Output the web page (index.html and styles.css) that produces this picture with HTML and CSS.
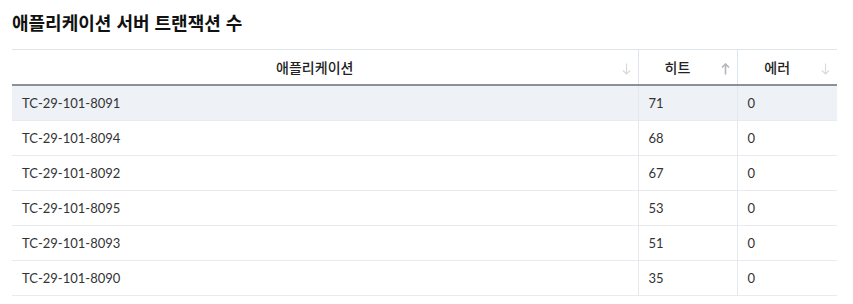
FILE: index.html
```html
<!DOCTYPE html>
<html lang="ko">
<head>
<meta charset="utf-8">
<link rel="stylesheet" href="styles.css">
</head>
<body>
<div class="panel">
  <h2 class="title">애플리케이션 서버 트랜잭션 수</h2>
  <table class="grid">
    <colgroup>
      <col class="c-app"><col class="c-hit"><col class="c-err">
    </colgroup>
    <thead>
      <tr>
        <th>애플리케이션<svg class="arrow" viewBox="0 0 9 12" width="9" height="12"><path d="M4.5 0.5V11M1 7.5l3.5 3.5 3.5-3.5"/></svg></th>
        <th>히트<svg class="arrow active" viewBox="0 0 9 12" width="9" height="12"><path d="M4.5 11.5V1M1 4.5l3.5-3.5 3.5 3.5"/></svg></th>
        <th>에러<svg class="arrow" viewBox="0 0 9 12" width="9" height="12"><path d="M4.5 0.5V11M1 7.5l3.5 3.5 3.5-3.5"/></svg></th>
      </tr>
    </thead>
    <tbody>
      <tr class="hl"><td>TC-29-101-8091</td><td>71</td><td>0</td></tr>
      <tr><td>TC-29-101-8094</td><td>68</td><td>0</td></tr>
      <tr><td>TC-29-101-8092</td><td>67</td><td>0</td></tr>
      <tr><td>TC-29-101-8095</td><td>53</td><td>0</td></tr>
      <tr><td>TC-29-101-8093</td><td>51</td><td>0</td></tr>
      <tr><td>TC-29-101-8090</td><td>35</td><td>0</td></tr>
    </tbody>
  </table>
</div>
</body>
</html>
```

FILE: styles.css
```css
html, body {
  margin: 0;
  padding: 0;
  background: #fff;
}
body {
  font-family: "Lato", "Noto Sans CJK KR", sans-serif;
  color: #333;
}
.panel {
  padding: 10px 16px 0 12px;
}
.title {
  margin: 0 0 15px 0;
  font-family: "Noto Sans CJK KR", sans-serif;
  font-size: 18px;
  font-weight: 700;
  line-height: 24px;
  color: #111;
}
.grid {
  width: 825px;
  border-collapse: collapse;
  table-layout: fixed;
  font-size: 13px;
}
.c-app { width: 626px; }
.c-hit { width: 99px; }
.c-err { width: 100px; }
.grid thead th {
  position: relative;
  height: 34px;
  padding: 0 30px 0 10px;
  font-family: "Noto Sans CJK KR", sans-serif;
  font-weight: 500;
  font-size: 14px;
  color: #222;
  border-top: 1px solid #dfe4ea;
  border-bottom: 2px solid #8b9198;
  border-left: 1px solid #dde5ee;
  text-align: center;
}
.grid thead th:first-child { border-left: none; }
.arrow {
  position: absolute;
  right: 7px;
  top: 13px;
  fill: none;
  stroke: #d6d8db;
  stroke-width: 1.1;
}
.arrow.active {
  stroke: #b3b6ba;
  stroke-width: 1.6;
}
.grid tbody td {
  height: 34px;
  padding: 0 10px;
  border-bottom: 1px solid #e8eaed;
  border-left: 1px solid #e4e9ef;
  line-height: 34px;
}
.grid tbody td:first-child { border-left: none; }
.grid tbody tr.hl td { background: #eef1f6; }
```
